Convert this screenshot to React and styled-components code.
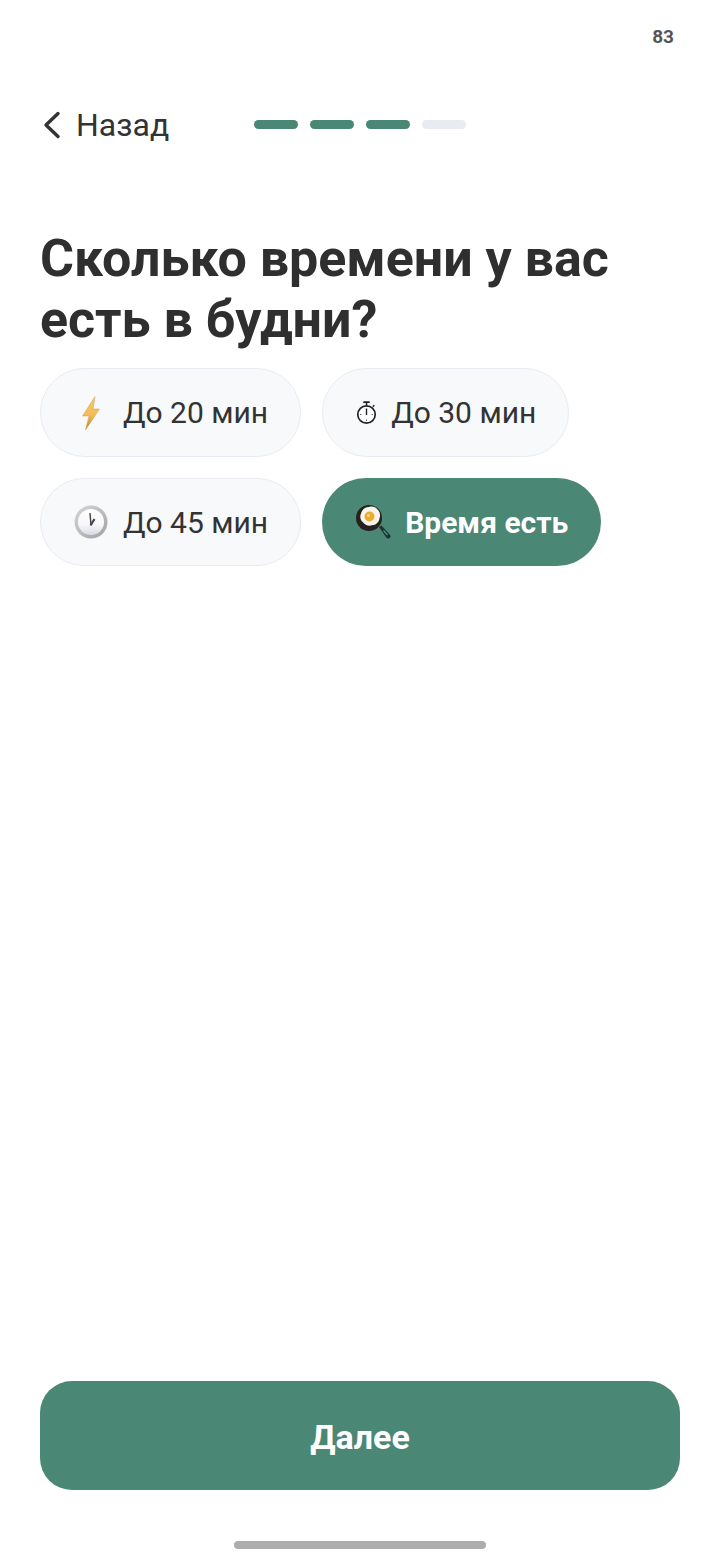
import React from "react";
import styled, { createGlobalStyle } from "styled-components";

const Global = createGlobalStyle`
  html, body { margin: 0; padding: 0; background: #fff; }
  * { box-sizing: border-box; }
`;

const Page = styled.div`
  width: 720px;
  height: 1560px;
  display: flex;
  flex-direction: column;
  font-family: Roboto, "Noto Sans", sans-serif;
  color: #2f2f2f;
  background: #fff;
`;

const StatusBar = styled.div`
  height: 50px;
  padding: 25px 46px 0 0;
  text-align: right;
  font-size: 19px;
  line-height: 23px;
  font-weight: 700;
  color: #555;
`;

const Header = styled.div`
  margin-top: 51px;
  height: 48px;
  padding-left: 40px;
  display: flex;
  align-items: center;
`;

const Back = styled.div`
  width: 214px;
  display: flex;
  align-items: center;
  gap: 11px;
  font-size: 32px;
  color: #333;
`;

const Progress = styled.div`
  display: flex;
  gap: 12px;
  margin-top: -2px;
`;

const Dash = styled.div`
  width: 44px;
  height: 9px;
  border-radius: 5px;
  background: ${(p) => (p.$on ? "#4a8775" : "#e8ebf1")};
`;

const Title = styled.h1`
  margin: 79px 0 0;
  padding: 0 40px;
  font-size: 52px;
  line-height: 61px;
  font-weight: 700;
  letter-spacing: -0.03px;
  color: #2f2f2f;
`;

const Chips = styled.div`
  margin-top: 18px;
  padding: 0 40px;
  display: flex;
  flex-wrap: wrap;
  gap: 21px;
`;

const Chip = styled.div`
  height: ${(p) => p.$height || 89}px;
  padding: 0 ${(p) => (p.$active ? 33 : 32)}px 0 33px;
  display: flex;
  align-items: center;
  justify-content: center;
  gap: ${(p) => p.$gap}px;
  border-radius: 45px;
  font-size: 30px;
  font-weight: ${(p) => (p.$active ? 700 : 400)};
  color: ${(p) => (p.$active ? "#fff" : "#333")};
  background: ${(p) => (p.$active ? "#4a8775" : "#f8f9fb")};
  border: ${(p) => (p.$active ? "none" : "1.5px solid #e8ebf1")};
`;

const Spacer = styled.div`
  flex: 1;
`;

const NextButton = styled.div`
  margin: 0 40px;
  height: 109px;
  padding-top: 3px;
  border-radius: 32px;
  background: #4a8775;
  color: #fff;
  font-size: 34px;
  font-weight: 700;
  display: flex;
  align-items: center;
  justify-content: center;
`;

const HomeBar = styled.div`
  width: 252px;
  height: 8px;
  border-radius: 4px;
  background: #adadad;
  margin: 51px auto 11px;
`;

const Chevron = () => (
  <svg width="25" height="32" viewBox="0 0 25 32" fill="none">
    <path d="M18 4.500 6 16l12 11.500" stroke="#333" strokeWidth="3.400" strokeLinecap="round" strokeLinejoin="round" />
  </svg>
);

const Bolt = () => (
  <svg width="34" height="36" viewBox="0 0 34 36">
    <defs>
      <linearGradient id="bolt" x1="0" y1="0" x2="0" y2="1">
        <stop offset="0" stopColor="#f3c766" />
        <stop offset="0.55" stopColor="#f1bd58" />
        <stop offset="1" stopColor="#b97e30" />
      </linearGradient>
    </defs>
    <path d="M21 1.500 8.500 21H15l-3.500 14L25.500 14H19L21 1.500Z" fill="url(#bolt)" stroke="#d8a04a" strokeWidth="0.500" />
  </svg>
);

const Stopwatch = () => (
  <svg width="22" height="24" viewBox="0 0 22 24" fill="none">
    <path d="M8 1.200h5" stroke="#222" strokeWidth="1.800" strokeLinecap="round" />
    <path d="M10.500 1.500v3M16.800 5.800l1.500-1.500" stroke="#222" strokeWidth="1.500" />
    <circle cx="10.500" cy="13.500" r="8.700" fill="#fff" stroke="#222" strokeWidth="1.700" />
    <path d="M10.500 14V7.500" stroke="#222" strokeWidth="1.400" />
    <path d="M10.500 18.500v1.500M4 13.500h1.500M15.500 13.500H17" stroke="#666" strokeWidth="1" />
  </svg>
);

const Clock = () => (
  <svg width="34" height="34" viewBox="0 0 34 34">
    <defs>
      <linearGradient id="clockRim" x1="0" y1="0" x2="1" y2="1">
        <stop offset="0" stopColor="#d8d8d8" />
        <stop offset="1" stopColor="#a0a0a0" />
      </linearGradient>
      <linearGradient id="clockFace" x1="0" y1="0" x2="0" y2="1">
        <stop offset="0" stopColor="#ffffff" />
        <stop offset="0.6" stopColor="#f8f8fb" />
        <stop offset="1" stopColor="#d9d9e6" />
      </linearGradient>
    </defs>
    <circle cx="17" cy="17" r="16.500" fill="url(#clockRim)" />
    <circle cx="17" cy="17" r="13" fill="url(#clockFace)" />
    <path d="M16 8 17 20" fill="none" stroke="#444" strokeWidth="1.400" />
    <path d="M16.500 20.500 20.500 14" fill="none" stroke="#444" strokeWidth="2.200" />
  </svg>
);

const Pan = () => (
  <svg width="36" height="36" viewBox="0 0 36 36">
    <path d="M24 23l2.500-1.500 8.500 9.500c1.200 1.500 0 3.800-2 3.500-.7 0-1.200-.4-1.700-.9Z" fill="#22302f" />
    <path d="M28.500 26.500l4 4.500" stroke="#3e8f84" strokeWidth="1.500" />
    <circle cx="14" cy="14" r="13" fill="#24211f" />
    <path d="M14 3c3-1 7 0 8.500 2.500 2.500 2 3.200 5.800 2 8.800-.2 3.500-3.500 7-7.500 7-3.500 1.300-7-.3-9-3-2.500-2-3.500-5.500-2-8.800C6.500 6 10.500 2.700 14 3Z" fill="#f8f4ec" />
    <circle cx="14.500" cy="12.500" r="5" fill="#e9ad2e" />
    <circle cx="13.500" cy="11.500" r="1.500" fill="#f8d57a" />
  </svg>
);

export default function App() {
  return (
    <Page>
      <Global />
      <StatusBar>83</StatusBar>
      <Header>
        <Back>
          <Chevron />
          Назад
        </Back>
        <Progress>
          <Dash $on />
          <Dash $on />
          <Dash $on />
          <Dash />
        </Progress>
      </Header>
      <Title>
        Сколько времени у вас
        <br />
        есть в будни?
      </Title>
      <Chips>
        <Chip $gap={15}>
          <Bolt />
          До 20 мин
        </Chip>
        <Chip $gap={13}>
          <Stopwatch />
          До 30 мин
        </Chip>
        <Chip $gap={15} $height={88}>
          <Clock />
          До 45 мин
        </Chip>
        <Chip $active $gap={14} $height={88}>
          <Pan />
          Время есть
        </Chip>
      </Chips>
      <Spacer />
      <NextButton>Далее</NextButton>
      <HomeBar />
    </Page>
  );
}
